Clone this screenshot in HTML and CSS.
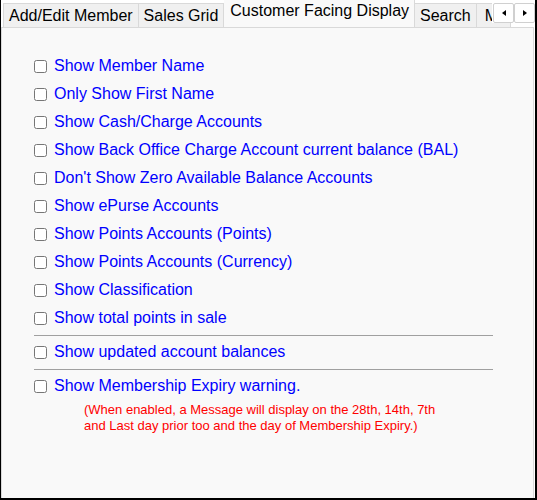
FILE: index.html
```html
<!DOCTYPE html>
<html lang="en">

<head>
    <meta charset="UTF-8">
    <title>Customer Facing Display</title>
    <link rel="stylesheet" href="styles.css">
</head>

<body>
    <div class="window">
        <div class="tabs">
            <div class="tab">Add/Edit Member</div>
            <div class="tab">Sales Grid</div>
            <div class="tab active">Customer Facing Display</div>
            <div class="tab">Search</div>
            <div class="tab more">M</div>
            <div class="scroll">
                <button class="arrow left"></button>
                <button class="arrow right"></button>
            </div>
        </div>
        <div class="panel">
            <label class="row"><input type="checkbox"> Show Member Name</label>
            <label class="row"><input type="checkbox"> Only Show First Name</label>
            <label class="row"><input type="checkbox"> Show Cash/Charge Accounts</label>
            <label class="row"><input type="checkbox"> Show Back Office Charge Account current balance (BAL)</label>
            <label class="row"><input type="checkbox"> Don't Show Zero Available Balance Accounts</label>
            <label class="row"><input type="checkbox"> Show ePurse Accounts</label>
            <label class="row"><input type="checkbox"> Show Points Accounts (Points)</label>
            <label class="row"><input type="checkbox"> Show Points Accounts (Currency)</label>
            <label class="row"><input type="checkbox"> Show Classification</label>
            <label class="row"><input type="checkbox"> Show total points in sale</label>
            <div class="sep"></div>
            <label class="row"><input type="checkbox"> Show updated account balances</label>
            <div class="sep"></div>
            <label class="row"><input type="checkbox"> Show Membership Expiry warning.</label>
            <div class="note">
                (When enabled, a Message will display on the 28th, 14th, 7th<br>
                and Last day prior too and the day of Membership Expiry.)
            </div>
        </div>
    </div>
</body>

</html>
```

FILE: styles.css
```css
body {
    margin: 0;
    font-family: "Liberation Sans", Arial, sans-serif;
}

.window {
    width: 537px;
    height: 500px;
    box-sizing: border-box;
    border-left: 1px solid #000;
    border-right: 2px solid #000;
    border-bottom: 2px solid #000;
    background: #fff;
    display: flex;
    flex-direction: column;
}

.tabs {
    position: relative;
    display: flex;
    align-items: flex-end;
    height: 27px;
    padding-left: 2px;
    overflow: hidden;
    flex-shrink: 0;
}

.tab {
    flex-shrink: 0;
    height: 24px;
    line-height: 24px;
    padding: 0 5px;
    font-size: 16px;
    color: #000;
    background: #f0f0f0;
    border: 1px solid #d9d9d9;
    border-bottom: none;
    border-left: none;
    box-sizing: border-box;
}

.tab:first-child {
    border-left: 1px solid #d9d9d9;
}

.tab.active {
    height: 27px;
    line-height: 22px;
    padding: 0 5px 0 6px;
    background: #f9f9f9;
    border-top: none;
}

.tab.more {
    width: 34px;
    padding-left: 8px;
}

.scroll {
    position: absolute;
    top: 3px;
    right: 0;
    display: flex;
    background: #fff;
    padding-left: 1px;
}

.arrow {
    width: 21px;
    height: 20px;
    margin: 0;
    padding: 0;
    background: #fff;
    border: 1px solid #d0d0d0;
    border-radius: 2px;
    position: relative;
}

.arrow::after {
    content: "";
    position: absolute;
    top: 6px;
    left: 8px;
    border-top: 3px solid transparent;
    border-bottom: 3px solid transparent;
}

.arrow.left::after {
    border-right: 4px solid #000;
}

.arrow.right::after {
    border-left: 4px solid #000;
}

.panel {
    flex: 1;
    background: #f9f9f9;
    border: 1px solid #d9d9d9;
    border-bottom: none;
    margin-right: 1px;
    padding: 24px 40px 0 32px;
}

.row {
    display: flex;
    align-items: center;
    height: 28px;
    font-size: 16px;
    color: #0000ff;
}

.row input {
    width: 13px;
    height: 13px;
    margin: 0 7px 0 0;
}

.sep {
    height: 1px;
    background: #a0a0a0;
    margin: 3px 0 2px;
}

.note {
    margin-top: 2px;
    padding-left: 50px;
    font-size: 13px;
    line-height: 16px;
    color: #ff0000;
}
```
